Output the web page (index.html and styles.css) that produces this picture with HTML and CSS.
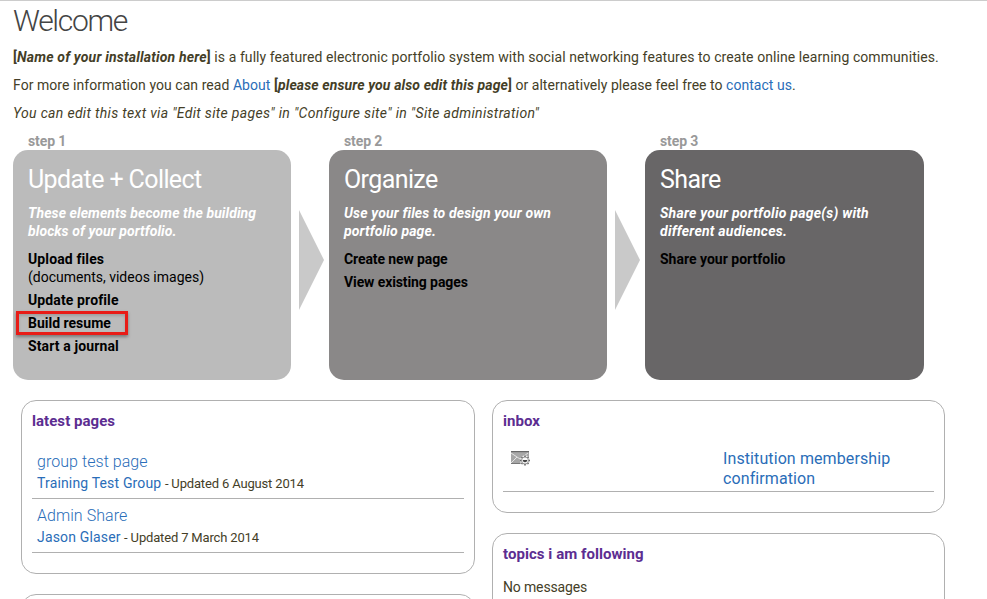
FILE: index.html
```html
<!DOCTYPE html>
<html lang="en">
<head>
<meta charset="utf-8">
<title>Welcome</title>
<link rel="stylesheet" href="styles.css">
</head>
<body>
<main>
  <h1>Welcome</h1>
  <p class="intro"><b class="name">[<i>Name of your installation here</i>]</b> <span class="about">is a fully featured electronic portfolio system with social networking features to create online learning communities.</span></p>
  <p class="intro"><span class="more">For more information you can read <a href="#">About</a></span> <b class="ensure">[<i>please ensure you also edit this page</i>]</b> <span class="alt">or alternatively please feel free to <a href="#">contact us</a>.</span></p>
  <p class="intro note"><i>You can edit this text via "Edit site pages" in "Configure site" in "Site administration"</i></p>

  <div class="steps">
    <section class="step">
      <div class="label">step 1</div>
      <div class="card collect">
        <h2>Update + Collect</h2>
        <p class="desc">These elements become the building<br>blocks of your portfolio.</p>
        <ul>
          <li><b>Upload files</b><br><span class="docs">(documents, videos images)</span></li>
          <li><b>Update profile</b></li>
          <li class="marked"><b>Build resume</b></li>
          <li><b>Start a journal</b></li>
        </ul>
      </div>
    </section>
    <svg class="arrow" viewBox="0 0 25 100"><path d="M0 0L25 50L0 100Z"/></svg>
    <section class="step">
      <div class="label">step 2</div>
      <div class="card organize">
        <h2>Organize</h2>
        <p class="desc">Use your files to design your own<br>portfolio page.</p>
        <ul>
          <li><b>Create new page</b></li>
          <li><b>View existing pages</b></li>
        </ul>
      </div>
    </section>
    <svg class="arrow" viewBox="0 0 25 100"><path d="M0 0L25 50L0 100Z"/></svg>
    <section class="step last">
      <div class="label">step 3</div>
      <div class="card share">
        <h2>Share</h2>
        <p class="desc">Share your portfolio page(s) with<br>different audiences.</p>
        <ul>
          <li><b>Share your portfolio</b></li>
        </ul>
      </div>
    </section>
  </div>

  <div class="columns">
    <div class="column left">
      <section class="block pages">
        <h3>latest pages</h3>
        <div class="row">
          <a class="title" href="#">group test page</a>
          <div class="meta"><a href="#">Training Test Group</a> <span>- Updated 6 August 2014</span></div>
        </div>
        <div class="row">
          <a class="title" href="#">Admin Share</a>
          <div class="meta"><a href="#">Jason Glaser</a> <span>- Updated 7 March 2014</span></div>
        </div>
      </section>
      <section class="block"></section>
    </div>
    <div class="column right">
      <section class="block inbox">
        <h3>inbox</h3>
        <div class="message">
          <svg class="mail" viewBox="0 0 20 16">
            <rect x="0" y="1" width="18" height="13" fill="#a6a6a6"/>
            <path d="M0 1H18L9 8Z" fill="#a8a8a8"/>
            <path d="M0 1H18V2.2H0Z" fill="#686868"/>
            <path d="M0 3L9 9L17 3M0 13L6 7" fill="none" stroke="#e4e4e4"/>
            <path d="M0 13.5H9" stroke="#777"/>
            <circle cx="14" cy="10.5" r="5" fill="#eee"/>
            <path d="M14 5.5V15.5M9 10.5H19M10.5 7L17.5 14M17.5 7L10.5 14" stroke="#666" stroke-width="1.6"/>
            <circle cx="14" cy="10.5" r="3.5" fill="#f8f8f8" stroke="#888" stroke-width=".8"/>
            <path d="M11.8 10H16.2V11Q14 13.4 11.8 11Z" fill="#444"/>
          </svg>
          <a href="#">Institution membership confirmation</a>
        </div>
      </section>
      <section class="block topics">
        <h3>topics i am following</h3>
        <p>No messages</p>
      </section>
    </div>
  </div>
</main>
</body>
</html>
```
FILE: styles.css
```css
* { box-sizing: border-box; }
body {
  margin: 0;
  border-top: 1px solid #ccc;
  background: #fff;
  color: #443e27;
  font: 14px/18px Roboto, sans-serif;
}
h1, h2, h3, p, ul { margin: 0; padding: 0; }
a { color: #2a6db8; text-decoration: none; }
main { height: 598px; padding: 0 13px; overflow: hidden; }
h1 { height: 47px; font-size: 30px; line-height: 40px; font-weight: 300; letter-spacing: -1.3px; color: #444; }
.intro { margin-bottom: 10px; white-space: nowrap; }
.name { letter-spacing: .18px; }
.about { letter-spacing: .075px; }
.more { letter-spacing: .05px; }
.alt { letter-spacing: .03px; }
.ensure { letter-spacing: .11px; }
.note { letter-spacing: .32px; }
.steps { display: flex; align-items: flex-end; }
.step { flex: 0 0 278px; }
.step.last { flex-basis: 279px; }
.label { padding-left: 15px; color: #999; font-weight: 700; letter-spacing: -.1px; }
.card { height: 230px; padding: 15px; border-radius: 15px; color: #000; }
.collect { background: #bbb; }
.organize { background: #8a8888; }
.share { background: #686667; }
.card h2 { height: 39px; font-size: 25px; line-height: 29px; font-weight: 400; letter-spacing: -.6px; color: #fff; }
.desc { margin-bottom: 10px; color: #fff; font-weight: 700; font-style: italic; letter-spacing: .08px; white-space: nowrap; }
.organize .desc { letter-spacing: .14px; }
.share .desc { letter-spacing: .24px; }
.card ul { list-style: none; }
.card li { margin-bottom: 5px; }
.collect b { letter-spacing: .12px; }
.organize b { letter-spacing: -.1px; }
.card .marked {
  width: 112px;
  height: 24px;
  margin: -3px 0 2px -12px;
  padding: 0 0 0 9px;
  border: 3px solid #e81c17;
  box-shadow: 0 2px 3px rgba(0, 0, 0, .35), inset 0 2px 3px rgba(0, 0, 0, .15);
}
.marked b { letter-spacing: 0; }
.arrow { width: 25px; height: 100px; margin: 0 5px 70px 8px; fill: #c9c9c9; }
.columns { display: flex; gap: 17px; padding: 20px 0 0 8px; }
.column { width: 454px; }
.right { width: 453px; }
.block { padding: 10px; border: 1px solid #b0b0b0; border-radius: 15px; margin-bottom: 20px; height: 174px; }
.block h3 { font-size: 15px; line-height: 20px; font-weight: 700; letter-spacing: .05px; color: #5c2d91; }
.row { height: 54px; padding: 6px 5px 0; border-bottom: 1px solid #b0b0b0; }
h3 + .row { height: 57px; margin-top: 11px; padding-top: 9px; }
.title { display: block; font-size: 16px; line-height: 22px; font-weight: 300; letter-spacing: .05px; }
.meta { line-height: 21px; }
.meta a { letter-spacing: .16px; }
.meta span { font-size: 13px; letter-spacing: -.16px; }
.inbox { height: 113px; }
.message { display: flex; height: 50px; margin-top: 11px; padding: 7px 8px 0; border-bottom: 1px solid #b0b0b0; }
.message a { width: 180px; font-size: 16px; line-height: 20px; letter-spacing: .1px; }
.mail { width: 20px; height: 16px; margin-right: 192px; margin-top: 1px; }
.topics p { margin-top: 14px; letter-spacing: -.15px; }
```
